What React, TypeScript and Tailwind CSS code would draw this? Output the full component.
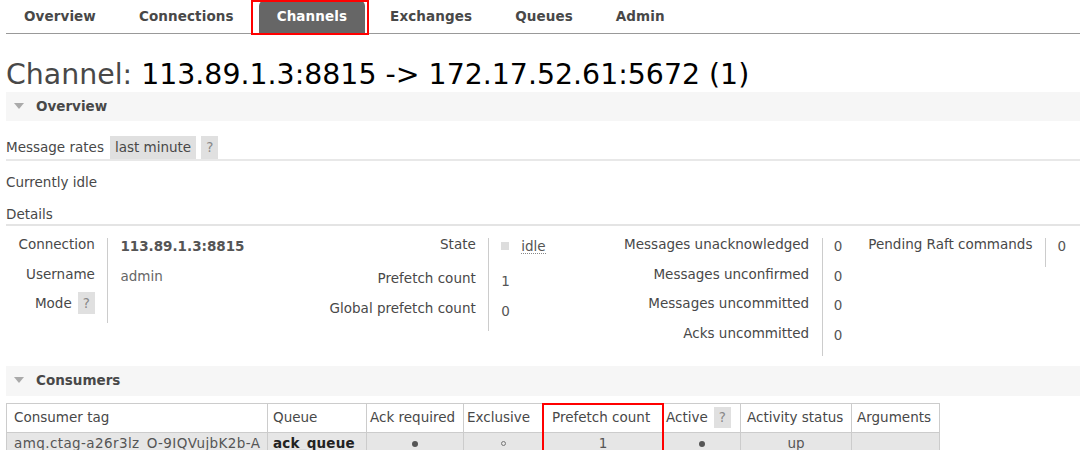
import React from "react";

const Tri = () => (
  <svg width="10" height="6" viewBox="0 0 10 6" className="shrink-0">
    <path d="M0 0 L10 0 L5 6 Z" fill="#aaa" />
  </svg>
);

const Help = () => (
  <span className="inline-block bg-[#e0e0e0] text-[#888] px-[5px] py-[5px] -my-[5px] ml-[6px] leading-[12px]">?</span>
);

const Dot = () => <span className="inline-block w-[6px] h-[6px] rounded-full bg-[#555] align-middle" />;
const Ring = () => <span className="inline-block w-[5px] h-[5px] rounded-full border border-[#777] align-middle" />;

export default function App() {
  const tabs = ["Overview", "Connections", "Channels", "Exchanges", "Queues", "Admin"];
  return (
    <div className="w-[1080px] h-[450px] overflow-hidden bg-white pl-[6px] font-['DejaVu_Sans',sans-serif] text-[13.5px] text-[#484848]">
      {/* Nav */}
      <div className="h-[34px] border-b border-[#999] flex gap-[7px]">
        {tabs.map((t) =>
          t === "Channels" ? (
            <div key={t} className="relative h-[33px] px-[18px] pb-[1px] flex items-center font-bold tracking-[0.1px] text-white bg-[#666] rounded-t-[6px]">
              {t}
              <div className="absolute -left-[8px] -right-[4px] top-0 -bottom-[2px] border-2 border-[#ff0000]" />
            </div>
          ) : (
            <div key={t} className="h-[33px] px-[18px] pb-[1px] flex items-center font-bold tracking-[0.1px]">
              {t}
            </div>
          )
        )}
      </div>

      {/* Title */}
      <h1 className="mt-[25px] h-[33px] leading-[32px] text-[28.4px] font-normal whitespace-nowrap">
        <span className="text-[#484848]">Channel:</span>
        <span className="text-black"> 113.89.1.3:8815 -&gt; 172.17.52.61:5672 (1)</span>
      </h1>

      {/* Overview header */}
      <div className="h-[29px] bg-[#f6f6f6] flex items-center pl-[8px] pb-[1px] gap-[12px] font-bold">
        <Tri />
        <span>Overview</span>
      </div>

      {/* Message rates */}
      <div className="mt-[14.5px] h-[25px] border-b-2 border-[#e8e8e8] flex items-stretch">
        <span className="self-center">Message rates</span>
        <span className="ml-[6px] bg-[#e0e0e0] px-[5px] h-[23px] flex items-center">last minute</span>
        <span className="ml-[5px] bg-[#e0e0e0] text-[#888] px-[5px] h-[23px] flex items-center">?</span>
      </div>

      <div className="mt-[11px] h-[20px] leading-[20px]">Currently idle</div>
      <div className="mt-[12px] h-[20px] leading-[20px] border-b-2 border-[#e4e4e4] box-content">Details</div>

      {/* Details tables */}
      <div className="mt-[12.5px] flex items-start leading-[12px]">
        {/* Table 1 */}
        <div className="grid grid-cols-[101.4px_199.6px]">
          <div className="h-[29.5px] text-right pr-[12.5px]">Connection</div>
          <div className="h-[29.5px] border-l border-[#ccc] pl-[12px] pt-[2px] font-bold text-[#555]">113.89.1.3:8815</div>
          <div className="h-[29.5px] text-right pr-[12.5px]">Username</div>
          <div className="h-[29.5px] border-l border-[#ccc] pl-[12px] pt-[2px] text-[#666]">admin</div>
          <div className="h-[26px] text-right pr-[12.5px]">Mode<Help /></div>
          <div className="h-[26px] border-l border-[#ccc] pl-[12px] pt-[2px]"></div>
        </div>
        {/* Table 2 */}
        <div className="grid grid-cols-[181.3px_121.7px]">
          <div className="h-[34px] text-right pr-[12.5px]">State</div>
          <div className="h-[34px] border-l border-[#ccc] pl-[12px] pt-[2px] flex items-start">
            <span className="inline-block w-[8px] h-[8px] bg-[#ddd] mt-[1.5px]" />
            <span className="ml-[12px] pb-[1px] border-b border-dotted border-[#888] text-[#555]">idle</span>
          </div>
          <div className="h-[29.5px] text-right pr-[12.5px]">Prefetch count</div>
          <div className="h-[29.5px] border-l border-[#ccc] pl-[12px] pt-[3px] text-[#555]">1</div>
          <div className="h-[29.5px] text-right pr-[12.5px]">Global prefetch count</div>
          <div className="h-[29.5px] border-l border-[#ccc] pl-[12px] pt-[3px] text-[#555]">0</div>
        </div>
        {/* Table 3 */}
        <div className="grid grid-cols-[211.7px_32.3px]">
          <div className="h-[29.5px] text-right pr-[12.5px]">Messages unacknowledged</div>
          <div className="h-[29.5px] border-l border-[#ccc] pl-[11px] pt-[2px] text-[#555]">0</div>
          <div className="h-[29.5px] text-right pr-[12.5px]">Messages unconfirmed</div>
          <div className="h-[29.5px] border-l border-[#ccc] pl-[11px] pt-[2px] text-[#555]">0</div>
          <div className="h-[29.5px] text-right pr-[12.5px]">Messages uncommitted</div>
          <div className="h-[29.5px] border-l border-[#ccc] pl-[11px] pt-[2px] text-[#555]">0</div>
          <div className="h-[29.5px] text-right pr-[12.5px]">Acks uncommitted</div>
          <div className="h-[29.5px] border-l border-[#ccc] pl-[11px] pt-[2px] text-[#555]">0</div>
        </div>
        {/* Table 4 */}
        <div className="grid grid-cols-[191px_35px]">
          <div className="h-[29px] text-right pr-[12.5px]">Pending Raft commands</div>
          <div className="h-[29px] border-l border-[#ccc] pl-[11.5px] pt-[2px] text-[#555]">0</div>
        </div>
      </div>

      {/* Consumers header */}
      <div className="mt-[10px] h-[29.5px] bg-[#f6f6f6] flex items-center pl-[8px] pb-[1px] gap-[12px] font-bold">
        <Tri />
        <span>Consumers</span>
      </div>

      {/* Consumers table */}
      <div className="relative mt-[7px] w-[933px]">
        <table className="border-collapse table-fixed w-[933px]">
          <colgroup>
            <col className="w-[261px]" />
            <col className="w-[99px]" />
            <col className="w-[97px]" />
            <col className="w-[79px]" />
            <col className="w-[121px]" />
            <col className="w-[77px]" />
            <col className="w-[111px]" />
            <col className="w-[88px]" />
          </colgroup>
          <thead>
            <tr className="h-[29px] bg-white">
              <th className="border border-[#ccc] font-normal text-left pl-[7px] whitespace-nowrap">Consumer tag</th>
              <th className="border border-[#ccc] font-normal text-left pl-[5px] whitespace-nowrap">Queue</th>
              <th className="border border-[#ccc] font-normal text-left pl-[3px] whitespace-nowrap">Ack required</th>
              <th className="border border-[#ccc] font-normal text-left pl-[3px] whitespace-nowrap">Exclusive</th>
              <th className="border border-[#ccc] font-normal text-left pl-[9px] whitespace-nowrap">Prefetch count</th>
              <th className="border border-[#ccc] font-normal text-left pl-[2px] whitespace-nowrap">
                Active
                <span className="inline-block bg-[#e0e0e0] text-[#888] px-[5px] py-[4px] ml-[6px] leading-[13px]">?</span>
              </th>
              <th className="border border-[#ccc] font-normal text-left pl-[6px] whitespace-nowrap">Activity status</th>
              <th className="border border-[#ccc] font-normal text-left pl-[5px] whitespace-nowrap">Arguments</th>
            </tr>
          </thead>
          <tbody>
            <tr className="h-[22px] bg-[#e6e6e6] text-[#555]">
              <td className="border border-[#ccc] pl-[7px] whitespace-nowrap tracking-[0.4px]">amq.ctag-a26r3lz_O-9IQVujbK2b-A</td>
              <td className="border border-[#ccc] pl-[5px] font-bold text-[#222] whitespace-nowrap tracking-[0.2px]">ack_queue</td>
              <td className="border border-[#ccc] text-center"><Dot /></td>
              <td className="border border-[#ccc] text-center"><Ring /></td>
              <td className="border border-[#ccc] text-center">1</td>
              <td className="border border-[#ccc] text-center"><Dot /></td>
              <td className="border border-[#ccc] text-center">up</td>
              <td className="border border-[#ccc]"></td>
            </tr>
          </tbody>
        </table>
        <div className="absolute left-[535.5px] top-0 w-[122px] h-[51px] border-2 border-[#ff0000]" />
      </div>
    </div>
  );
}
